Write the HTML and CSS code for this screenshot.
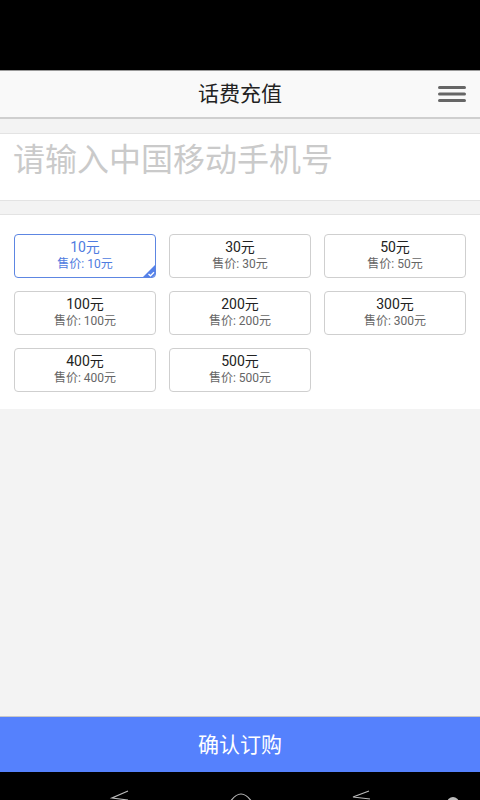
FILE: index.html
```html
<!DOCTYPE html>
<html lang="zh">
<head>
<meta charset="utf-8">
<title>话费充值</title>
<link rel="stylesheet" href="styles.css">
</head>
<body>
<div class="app">
  <div class="statusbar"></div>
  <header class="header">
    <h1 class="title">话费充值</h1>
    <span class="menu">
      <svg width="28" height="18" viewBox="0 0 28 18"><rect x="0" y="1" width="28" height="3" rx="1.5" fill="#666"/><rect x="0" y="7.5" width="28" height="3" rx="1.5" fill="#666"/><rect x="0" y="14" width="28" height="3" rx="1.5" fill="#666"/></svg>
    </span>
  </header>
  <div class="gap"></div>
  <div class="input-row">
    <span class="placeholder">请输入中国移动手机号</span>
  </div>
  <div class="gap small"></div>
  <section class="panel">
    <div class="card selected">
      <span class="face">10元</span><span class="price">售价: 10元</span>
      <span class="corner"><svg width="14" height="14" viewBox="0 0 14 14"><path d="M14 0 L14 11 Q14 14 11 14 L0 14 Z" fill="#5581e9"/><path d="M6.5 10 L8.5 11.8 L12 8.2" stroke="#fff" stroke-width="1.3" fill="none"/></svg></span>
    </div>
    <div class="card"><span class="face">30元</span><span class="price">售价: 30元</span></div>
    <div class="card"><span class="face">50元</span><span class="price">售价: 50元</span></div>
    <div class="card"><span class="face">100元</span><span class="price">售价: 100元</span></div>
    <div class="card"><span class="face">200元</span><span class="price">售价: 200元</span></div>
    <div class="card"><span class="face">300元</span><span class="price">售价: 300元</span></div>
    <div class="card"><span class="face">400元</span><span class="price">售价: 400元</span></div>
    <div class="card"><span class="face">500元</span><span class="price">售价: 500元</span></div>
  </section>
  <div class="spacer"></div>
  <button class="confirm">确认订购</button>
  <nav class="navbar">
    <svg width="480" height="28" viewBox="0 0 480 28">
      <path d="M128 19 L112 26 L128 28" stroke="#bbb" stroke-width="1.2" fill="none"/>
      <path d="M230 30 Q241 14 252 30" stroke="#bbb" stroke-width="1.2" fill="none"/>
      <path d="M369 19 L353 25 L370 27" stroke="#bbb" stroke-width="1.2" fill="none"/>
      <circle cx="453" cy="31" r="6" fill="#bbb"/>
    </svg>
  </nav>
</div>
</body>
</html>
```
FILE: styles.css
```css
* { box-sizing: border-box; }
html, body { margin: 0; padding: 0; }
body {
  font-family: Roboto, "Noto Sans CJK SC", sans-serif;
  background: #000;
}
.app {
  width: 480px;
  height: 800px;
  display: flex;
  flex-direction: column;
  background: #f3f3f3;
  overflow: hidden;
}
.statusbar { height: 70px; background: #000; flex: none; }
.header {
  flex: none;
  height: 49px;
  background: #f9f9f9;
  border-top: 1px solid #9a9a9a;
  border-bottom: 2px solid #cfcfcf;
  display: flex;
  align-items: center;
  justify-content: center;
  position: relative;
  padding-bottom: 5px;
}
.title {
  margin: 0;
  font-size: 21px;
  font-weight: normal;
  color: #222;
  font-family: "Noto Sans CJK SC", sans-serif;
}
.menu {
  position: absolute;
  right: 14px;
  top: 14px;
  display: flex;
}
.gap { height: 14px; flex: none; }
.gap.small { height: 13px; }
.input-row {
  flex: none;
  height: 68px;
  background: #fff;
  border-top: 1px solid #e3e3e3;
  border-bottom: 1px solid #e3e3e3;
  display: flex;
  align-items: flex-start;
  padding: 7px 0 0 13px;
}
.placeholder {
  font-family: "Noto Sans CJK SC", sans-serif;
  font-size: 32px;
  line-height: 1;
  color: #cacaca;
}
.panel {
  flex: none;
  background: #fff;
  border-top: 1px solid #e3e3e3;
  padding: 19px 14px 17px;
  display: grid;
  grid-template-columns: repeat(3, 1fr);
  column-gap: 13px;
  row-gap: 13px;
}
.card {
  position: relative;
  height: 44px;
  border: 1.5px solid #cfcfcf;
  border-radius: 4px;
  display: flex;
  flex-direction: column;
  align-items: center;
  justify-content: center;
  line-height: 1.2;
  padding-bottom: 2px;
  overflow: hidden;
}
.face { font-size: 14px; color: #222; }
.price { font-size: 12px; color: #666; margin-top: 1px; }
.card.selected { border-color: #5d86e2; }
.card.selected .face, .card.selected .price { color: #4f7ce0; }
.corner {
  position: absolute;
  right: -1px;
  bottom: -1px;
  display: flex;
}
.spacer { flex: 1; }
.confirm {
  flex: none;
  height: 56px;
  border: none;
  border-top: 1px solid #c8c8c8;
  background: #5581fd;
  color: #fff;
  font-family: "Noto Sans CJK SC", sans-serif;
  font-size: 21px;
  padding: 0 0 4px;
  margin: 0;
  width: 100%;
}
.navbar { flex: none; height: 28px; background: #000; display: flex; }
```
